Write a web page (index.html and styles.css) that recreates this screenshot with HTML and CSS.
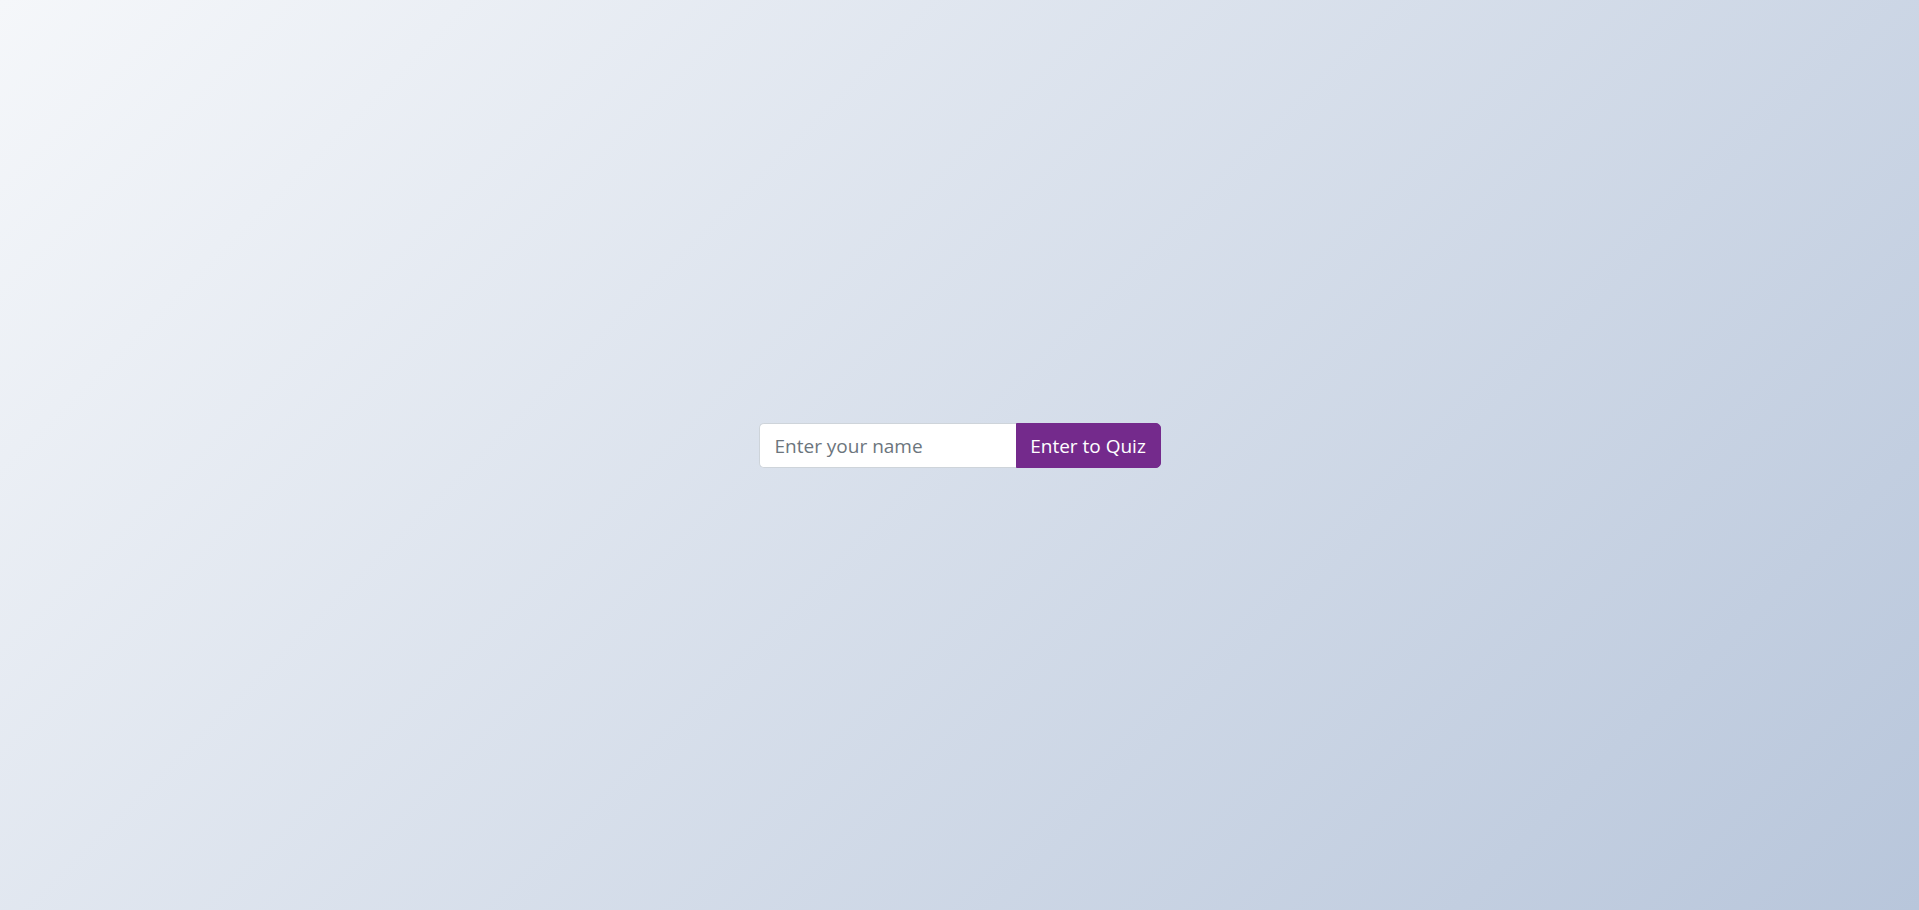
FILE: index.html
```html
<!DOCTYPE html>
<html lang="en">
<head>
<meta charset="utf-8">
<title>Quiz</title>
<link rel="stylesheet" href="styles.css">
</head>
<body>
<main class="page">
  <form class="entry">
    <input class="name-input" type="text" placeholder="Enter your name">
    <button class="enter-btn" type="button">Enter to Quiz</button>
  </form>
</main>
</body>
</html>
```

FILE: styles.css
```css
html, body {
  margin: 0;
  padding: 0;
  height: 100%;
}
body {
  background: linear-gradient(135deg, #f5f7fa 0%, #b8c6db 100%);
  font-family: "Open Sans", "Noto Sans", sans-serif;
}
.page {
  min-height: 100vh;
  box-sizing: border-box;
  display: flex;
  align-items: center;
  justify-content: center;
  padding-bottom: 19px;
}
.entry {
  display: flex;
  margin: 0;
}
.name-input {
  box-sizing: border-box;
  width: 257px;
  height: 45px;
  padding: 0 15px;
  border: 1px solid #ced4da;
  border-right: none;
  border-radius: 5px 0 0 5px;
  background: #fff;
  font-family: inherit;
  font-size: 19px;
  color: #495057;
  outline: none;
}
.name-input::placeholder {
  color: #6c757d;
  opacity: 1;
}
.enter-btn {
  box-sizing: border-box;
  width: 145px;
  height: 45px;
  padding: 0;
  border: 1px solid #742a8c;
  border-radius: 0 5px 5px 0;
  background: #742a8c;
  color: #fff;
  font-family: inherit;
  font-size: 19px;
  cursor: pointer;
}
```
